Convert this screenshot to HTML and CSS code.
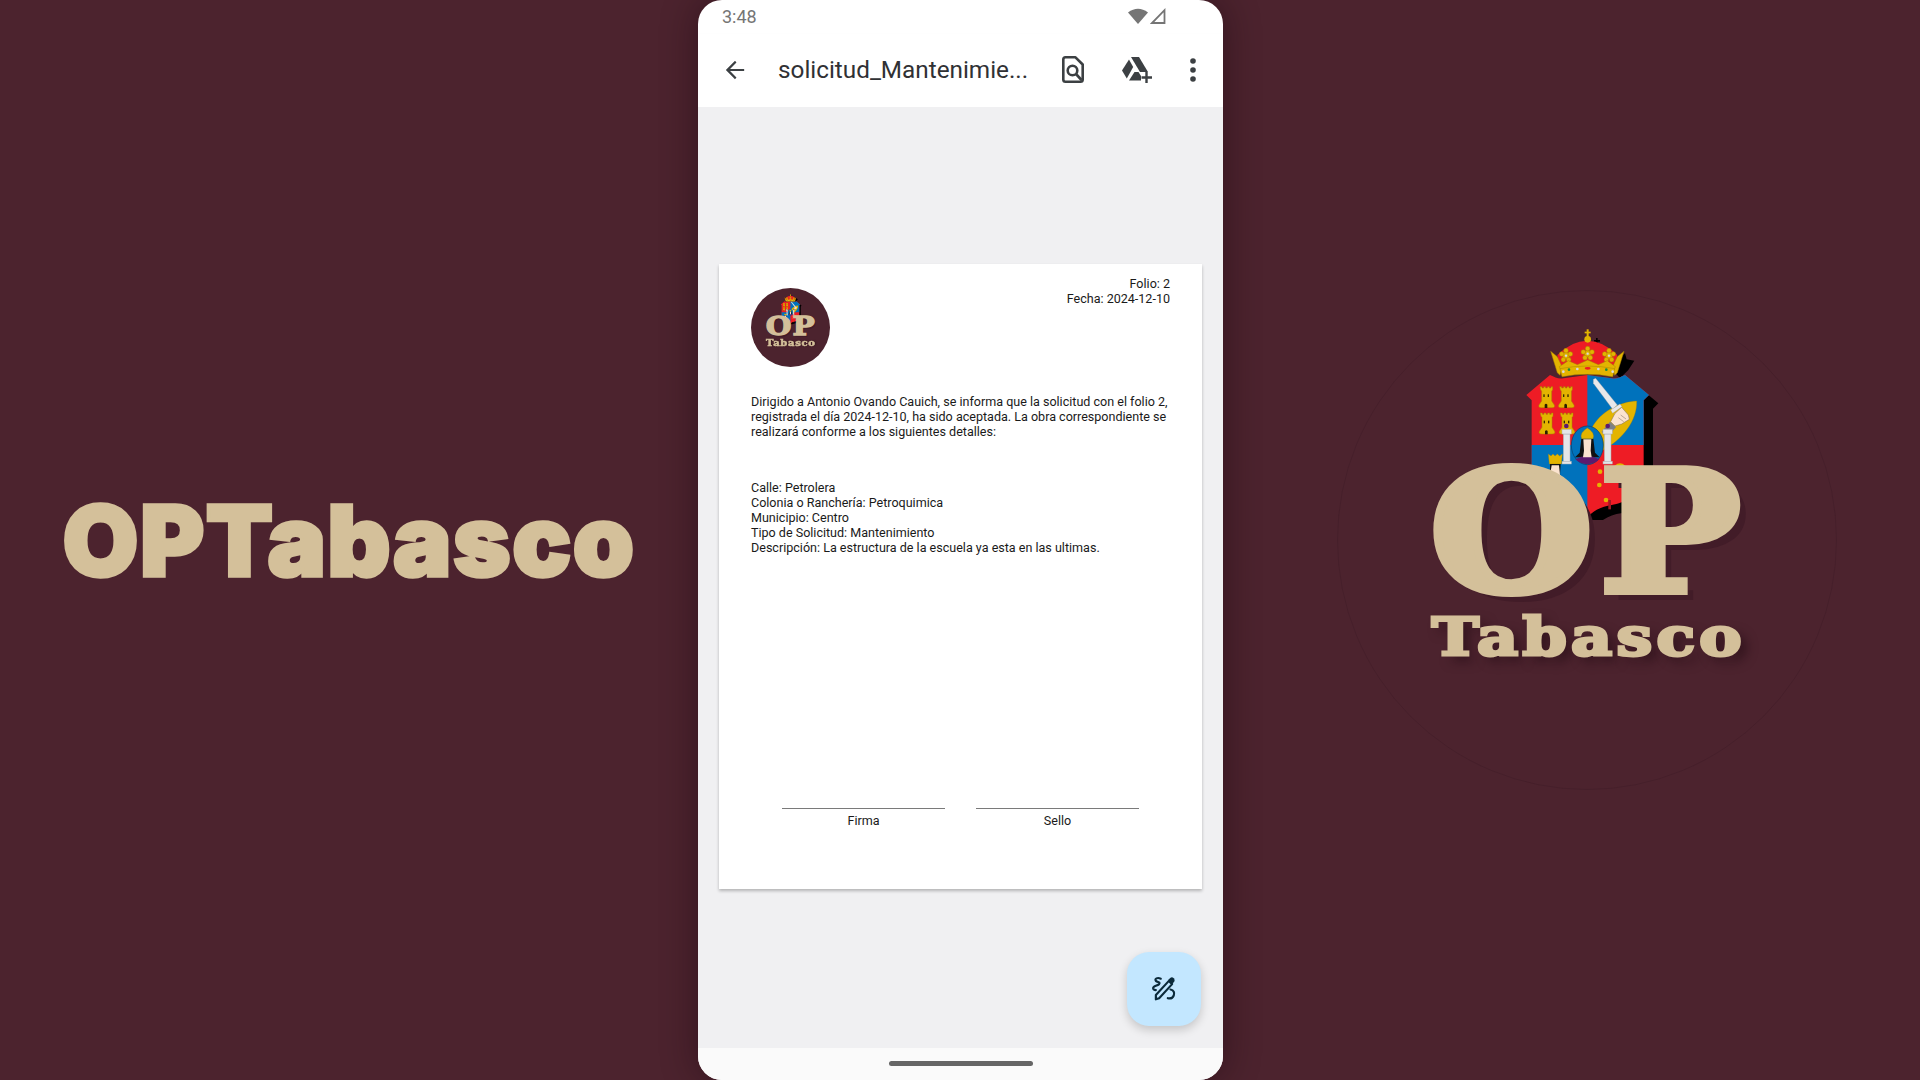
FILE: index.html
```html
<!DOCTYPE html>
<html lang="es">
<head>
<meta charset="utf-8">
<title>OPTabasco</title>
<link rel="stylesheet" href="styles.css">
</head>
<body>
<svg class="defs" width="0" height="0" aria-hidden="true">
  <defs>
    <path id="shield" d="M150 165 C165 172 175 178 190 175 L262 165 L335 175 C350 178 360 172 375 165 L447 225 L431 241 L431 480 C431 520 370 550 335 555 C310 558 280 570 262 592 C245 570 215 558 190 555 C155 550 95 520 95 480 L95 241 L79 225 Z"/>
    <g id="tower">
      <path fill="#e3b400" stroke="#a88400" stroke-width="1.5" d="M-18 -32 h6 v4 h5 v-4 h6 v4 h5 v-4 h6 v4 h5 v-4 h5 v10 l-3 3 v30 l8 12 q3 8 -7 8 h-32 q-10 0 -7 -8 l8 -12 v-30 l-3 -3 z"/>
      <rect x="-8" y="-9" width="4" height="8" fill="#3a2a00"/>
      <rect x="5" y="-9" width="4" height="8" fill="#3a2a00"/>
      <path fill="#2a1d00" d="M-4 32 v-10 q4 -5 8 0 v10 z"/>
    </g>
    <g id="leaf">
      <circle r="10"/><circle cx="-13" cy="-5" r="7"/><circle cx="13" cy="-5" r="7"/>
      <circle cy="-15" r="7"/><circle cx="-8" cy="12" r="7"/><circle cx="8" cy="12" r="7"/>
      <circle r="3.500" fill="#d9dadc" stroke="none"/>
    </g>
    <g id="crest">
      <g fill="#000">
        <use href="#shield" x="28" y="25"/>
        <path d="M330 140 L375 100 L380 118 L403 122 L385 150 L360 175 Z"/>
        <path d="M282 60 h6 v-6 h5 v6 h7 v5 h-7 v6 h-5 v-6 h-6 z"/>
      </g>
      <use href="#shield" fill="#ee1c25"/>
      <path fill="#0072bc" d="M262 165 L335 175 C350 178 360 172 375 165 L447 225 L431 241 L431 375 L262 375 Z"/>
      <path fill="#0072bc" d="M95 375 L262 375 L262 592 C245 570 215 558 190 555 C155 550 95 520 95 480 Z"/>
      <use href="#tower" x="138" y="232"/>
      <use href="#tower" x="197" y="232"/>
      <use href="#tower" x="139" y="311"/>
      <use href="#tower" x="199" y="311"/>
      <path fill="#e3b400" stroke="#a88400" d="M275 325 C300 275 360 245 410 243 C412 300 370 360 300 395 C290 370 275 345 275 325 Z"/>
      <path fill="#e8e8ea" stroke="#999" d="M280 178 L287 175 L352 255 L338 268 L280 190 Z"/>
      <path fill="#e8e8ea" stroke="#999" d="M332 270 L360 252 L366 260 L338 280 Z"/>
      <path fill="#fbe3cf" stroke="#7a6a5a" stroke-width="1.500" d="M345 280 L365 262 L385 285 L388 298 L365 312 L345 318 L332 305 Z"/>
      <path fill="none" stroke="#7a6a5a" stroke-width="1.500" d="M362 285 l16 12 M355 293 l16 12"/>
      <path fill="#7d8085" d="M330 305 L348 322 L320 352 L305 335 Z"/>
      <g fill="#e4e5e7" stroke="#a9abae" stroke-width="1.500">
        <rect x="190" y="342" width="20" height="84"/>
        <rect x="186" y="328" width="28" height="14"/>
        <rect x="186" y="424" width="28" height="8"/>
        <rect x="313" y="342" width="20" height="84"/>
        <rect x="309" y="328" width="28" height="14"/>
        <rect x="309" y="424" width="28" height="8"/>
      </g>
      <circle cx="199" cy="318" r="7" fill="#5b1a6e"/>
      <circle cx="323" cy="318" r="7" fill="#5b1a6e"/>
      <ellipse cx="262" cy="376" rx="48" ry="58" fill="#0072bc" stroke="#0a3e66" stroke-width="2"/>
      <path fill="#111" d="M244 356 h36 l5 42 l14 14 h-74 l14 -14 z"/>
      <path fill="#5b1a6e" d="M226 418 Q262 398 298 418 Q285 432 262 433 Q240 432 226 418 Z"/>
      <path fill="#fbe3cf" d="M250 358 h24 l-2 34 l3 20 h-26 l3 -20 z"/>
      <path fill="#e3b400" stroke="#a88400" d="M245 356 Q238 338 262 324 Q286 338 279 356 Z"/>
      <path fill="#e3b400" stroke="#a88400" d="M145 402 l8 6 l6 -6 l6 6 l7 -6 l7 6 l8 -6 l-3 30 h-36 z"/>
      <path fill="#111" d="M150 432 h32 l-2 35 h-30 z"/>
      <path fill="#fbe3cf" d="M155 436 h22 l3 28 l22 30 l-6 5 l-22 -22 l-25 -5 z"/>
      <path fill="#5b1a6e" d="M195 492 l17 -3 l6 20 l-14 4 z"/>
      <g fill="#e3b400">
        <circle cx="360" cy="450" r="20"/>
        <circle cx="300" cy="455" r="7"/>
        <circle cx="298" cy="495" r="7"/>
        <circle cx="318" cy="540" r="7"/>
      </g>
      <rect x="325" y="540" width="8" height="28" fill="#a01822"/>
      <path fill="#ee1c25" d="M172 105 Q215 62 262 62 Q310 62 352 105 L345 150 L180 150 Z"/>
      <g fill="#e3b400" stroke="#a88400" stroke-width="1.500">
        <use href="#leaf" x="198" y="107"/>
        <use href="#leaf" x="263" y="101"/>
        <use href="#leaf" x="327" y="107"/>
        <path d="M152 94 l20 16 l14 30 l-6 26 l-8 -8 z M372 94 l-20 16 l-14 30 l6 26 l8 -8 z"/>
        <path d="M178 140 L205 122 L232 134 L263 120 L295 134 L322 122 L346 140 L342 150 H182 Z"/>
        <path d="M180 146 Q262 130 344 146 L338 170 Q262 156 186 170 Z"/>
      </g>
      <g fill="#d9dadc">
        <circle cx="232" cy="147" r="4"/><circle cx="295" cy="147" r="4"/><circle cx="190" cy="155" r="4"/><circle cx="338" cy="155" r="4"/>
      </g>
      <ellipse cx="263" cy="145" rx="9" ry="4" fill="#ee1c25"/>
      <circle cx="207" cy="149" r="4" fill="#1c8a3c"/><circle cx="319" cy="149" r="4" fill="#1c8a3c"/>
      <g fill="#e3b400">
        <circle cx="263" cy="58" r="10"/>
        <rect x="260" y="28" width="6" height="24"/>
        <rect x="254" y="35" width="18" height="5"/>
      </g>
    </g>
  </defs>
</svg>

<main class="screen">
  <section class="side side-left">
    <h1 class="brand">OPTabasco</h1>
  </section>

  <section class="phone">
    <div class="status">
      <span class="clock">3:48</span>
      <span class="status-icons">
        <svg class="wifi" viewBox="0 0 20 16"><path fill="#757575" d="M0 4.500 Q10 -3 20 4.500 L10 16 Z"/></svg>
        <svg class="signal" viewBox="0 0 16 16"><path fill="none" stroke="#757575" stroke-width="1.800" d="M14.500 2.200 V15 H2 Z"/></svg>
      </span>
    </div>
    <header class="toolbar">
      <svg class="ic back" viewBox="0 0 24 24"><path fill="#3c4043" d="M22 10.800 H6.600 L13.600 3.800 L12 2 L2 12 L12 22 L13.600 20.200 L6.600 13.200 H22 Z"/></svg>
      <span class="title">solicitud_Mantenimie...</span>
      <svg class="ic doc" viewBox="0 0 22 27"><path fill="none" stroke="#3c4043" stroke-width="2.600" stroke-linejoin="round" d="M3.500 1.300 H13.500 L20.700 8.500 V23.500 Q20.700 25.700 18.500 25.700 H3.500 Q1.300 25.700 1.300 23.500 V3.500 Q1.300 1.300 3.500 1.300 Z"/><circle cx="10.500" cy="14.500" r="4.800" fill="none" stroke="#3c4043" stroke-width="2.600"/><path stroke="#3c4043" stroke-width="2.600" d="M14 18 L19.500 24"/></svg>
      <svg class="ic drive" viewBox="0 0 30 26"><path fill="#3c4043" d="M9 0 H17 L26 15 H18 Z"/><path fill="#3c4043" d="M7 2.500 L11.200 10 L4.800 21.500 L0 13.500 Z"/><path fill="#3c4043" d="M12.500 15 H16.500 L19 19 V23.500 H7 Z"/><path stroke="#3c4043" stroke-width="2.400" d="M24.500 15 V26 M19.500 20.500 H30"/></svg>
      <svg class="ic dots" viewBox="0 0 6 24"><circle cx="3" cy="3" r="2.800" fill="#3c4043"/><circle cx="3" cy="12" r="2.800" fill="#3c4043"/><circle cx="3" cy="21" r="2.800" fill="#3c4043"/></svg>
    </header>

    <div class="viewer">
      <article class="sheet">
        <div class="sheet-head">
          <div class="sheet-logo">
            <div class="logo logo-filled">
              <svg class="crest" viewBox="0 0 540 600"><use href="#crest"/></svg>
              <div class="logo-op">OP</div>
              <div class="logo-name">Tabasco</div>
            </div>
          </div>
          <div class="folio">
            <div>Folio: 2</div>
            <div>Fecha: 2024-12-10</div>
          </div>
        </div>
        <p class="letter">Dirigido a Antonio Ovando Cauich, se informa que la solicitud con el folio 2, registrada el día 2024-12-10, ha sido aceptada. La obra correspondiente se realizará conforme a los siguientes detalles:</p>
        <div class="details">
          <div>Calle: Petrolera</div>
          <div>Colonia o Ranchería: Petroquimica</div>
          <div>Municipio: Centro</div>
          <div>Tipo de Solicitud: Mantenimiento</div>
          <div>Descripción: La estructura de la escuela ya esta en las ultimas.</div>
        </div>
        <div class="signatures">
          <div class="sign">Firma</div>
          <div class="sign">Sello</div>
        </div>
      </article>
      <button class="fab" aria-label="Firmar">
        <svg viewBox="0 0 24 24" width="26" height="26"><path fill="none" stroke="#0b2a3a" stroke-width="2" stroke-linecap="round" d="M9 2.500 C6 1 3 2.500 4.500 4.500 C6 6 9 5.500 7.500 7.500 C5.500 9.500 1.500 9 2 11.500 C2.300 12.800 3.500 13 4.500 13"/><path fill="none" stroke="#0b2a3a" stroke-width="2" stroke-linejoin="round" d="M4.500 17.500 L16.500 4.500 L19.500 7.500 L7.500 20.500 L4.500 21.500 Z"/><path fill="#0b2a3a" d="M16 3.500 L18 1.500 Q19.500 .5 21 2 Q22.500 3.500 21.500 5 L19.500 7.500 Z"/><path fill="none" stroke="#0b2a3a" stroke-width="2" stroke-linecap="round" d="M18 12.500 C21 13 22 15.500 21 18 C20 20.500 17.500 21 15.500 20.500"/></svg>
      </button>
    </div>

    <footer class="navbar"><span class="pill"></span></footer>
  </section>

  <section class="side side-right">
    <div class="logo">
      <svg class="crest" viewBox="0 0 540 600"><use href="#crest"/></svg>
      <div class="logo-op">OP</div>
      <div class="logo-name">Tabasco</div>
    </div>
  </section>
</main>
</body>
</html>
```

FILE: styles.css
```css
* { box-sizing: border-box; }
html, body { margin: 0; padding: 0; height: 100%; }
body { background: #4c232e; overflow: hidden; font-family: Roboto, sans-serif; }
.defs { position: absolute; }

.screen { display: flex; width: 1920px; height: 1080px; }
.side { display: flex; align-items: center; }
.side-left { width: 698px; justify-content: center; }
.side-right { flex: 1; padding-left: 114px; }

.brand {
  margin: 2px 0 0;
  font-family: Inter, sans-serif;
  font-weight: 900;
  font-size: 98px;
  line-height: 1;
  color: #d4c09a;
  letter-spacing: 1.500px;
  -webkit-text-stroke: 3.500px #d4c09a;
}

/* Round emblem: fixed 500px composition, scaled down for the sheet */
.logo {
  position: relative;
  width: 500px;
  height: 500px;
  flex: none;
  border-radius: 50%;
  border: 1px solid rgba(40, 15, 22, .16);
  display: flex;
  flex-direction: column;
  align-items: center;
  padding: 166px 0 0 4px;
}
.logo-filled { background: #4c232e; border: none; transform: scale(.158); transform-origin: 0 0; }
.crest { position: absolute; left: 162px; top: 29px; width: 180px; height: 200px; }
.logo-op, .logo-name {
  position: relative;
  font-family: "DejaVu Serif", serif;
  font-weight: 700;
  color: #d4c09a;
  white-space: nowrap;
}
.logo-op {
  font-size: 167px;
  line-height: 150px;
  letter-spacing: 6px;
  -webkit-text-stroke: 8px #d4c09a;
  text-shadow: 9px 9px 0 #421c28;
  transform: scaleX(1.12);
}
.logo-name {
  font-size: 52px;
  line-height: 60px;
  letter-spacing: 3.500px;
  -webkit-text-stroke: 3px #d4c09a;
  text-shadow: 6px 6px 10px rgba(30, 8, 15, .55);
  transform: scaleX(1.22);
}

.phone {
  width: 525px;
  height: 1080px;
  flex: none;
  display: flex;
  flex-direction: column;
  background: #fff;
  border-radius: 24px;
  overflow: hidden;
  box-shadow: 0 0 36px rgba(20, 5, 10, .45);
}
.status {
  height: 34px;
  display: flex;
  align-items: center;
  justify-content: space-between;
  padding: 0 57px 2px 24px;
  flex: none;
}
.clock { font-size: 18px; color: #757575; }
.status-icons { display: flex; gap: 2px; align-items: center; }
.wifi { width: 20px; height: 16px; }
.signal { width: 16px; height: 16px; }

.toolbar {
  height: 73px;
  flex: none;
  display: flex;
  align-items: center;
  padding: 0 0 2px 26px;
  background: #fff;
  box-shadow: 0 2px 3px rgba(0, 0, 0, .12);
  position: relative;
}
.ic { flex: none; display: block; }
.back { width: 22px; height: 22px; }
.title { width: 284px; margin-left: 32px; font-size: 24.300px; color: #303134; white-space: nowrap; }
.doc { width: 22px; height: 27px; }
.drive { width: 30px; height: 26px; margin-left: 38px; }
.dots { width: 6px; height: 24px; margin-left: 38px; }

.viewer {
  position: relative;
  flex: 1;
  background: #f0f0f2;
  padding: 157px 21px 0;
}
.sheet {
  height: 625px;
  background: #fff;
  box-shadow: 0 2px 3px rgba(0, 0, 0, .25);
  padding: 12px 32px 0;
  font-size: 12.550px;
  line-height: 15px;
  color: #1a1a1a;
  display: flex;
  flex-direction: column;
}
.sheet-head { display: flex; justify-content: space-between; height: 118px; }
.sheet-logo { width: 79px; height: 79px; margin-top: 12px; }
.folio { text-align: right; }
.letter { margin: 0; }
.details { margin-top: 41px; }
.signatures {
  display: flex;
  justify-content: center;
  gap: 31px;
  margin-top: auto;
  margin-bottom: 61px;
}
.sign {
  width: 163px;
  border-top: 1px solid #7a7a7a;
  padding-top: 4px;
  text-align: center;
}

.fab {
  position: absolute;
  right: 22px;
  bottom: 22px;
  width: 74px;
  height: 74px;
  padding: 0;
  border: none;
  border-radius: 22px;
  background: #c3e7ff;
  box-shadow: 0 4px 10px rgba(0, 0, 0, .18);
  display: flex;
  align-items: center;
  justify-content: center;
}
.navbar {
  height: 32px;
  flex: none;
  background: #fafafa;
  display: flex;
  justify-content: center;
  padding-top: 13px;
}
.pill { width: 144px; height: 5px; border-radius: 3px; background: #666; }
```
